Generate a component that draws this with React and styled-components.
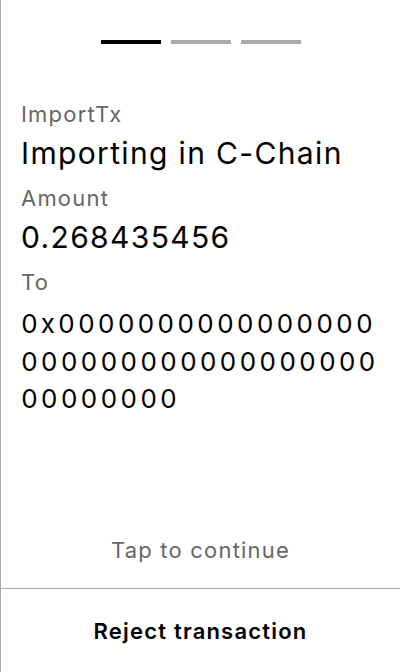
import React from 'react'
import styled, { createGlobalStyle } from 'styled-components'

const GlobalStyle = createGlobalStyle`
	html, body {
		margin: 0;
		padding: 0;
		background: #ffffff;
	}
	body {
		font-family: 'Inter', 'Liberation Sans', sans-serif;
		color: #000000;
	}
`

const Screen = styled.div`
	height: 100vh;
	box-sizing: border-box;
	border-left: 1px solid #aaaaaa;
	display: flex;
	flex-direction: column;
	background: #ffffff;
`

const Body = styled.div`
	flex: 1;
	display: flex;
	flex-direction: column;
	padding: 40px 20px 23px 20px;
	cursor: pointer;
`

const Steps = styled.div`
	display: flex;
	justify-content: center;
	gap: 10px;
	margin-bottom: 56px;
`

const Step = styled.div`
	width: 60px;
	height: 4px;
	background: ${(p) => (p.active ? '#000000' : '#aaaaaa')};
`

const Label = styled.div`
	font-size: 22px;
	line-height: 28px;
	letter-spacing: 1.2px;
	color: #666666;
	margin-bottom: 6px;
`

const Value = styled.div`
	font-size: 30px;
	line-height: 38px;
	letter-spacing: 1.35px;
	color: #000000;
	margin-bottom: 12px;
`

const Address = styled.div`
	font-size: 26px;
	line-height: 37.5px;
	letter-spacing: 3px;
	font-variant-numeric: tabular-nums;
	padding-top: 3px;
	color: #000000;
	word-break: break-all;
`

const Spacer = styled.div`
	flex: 1;
`

const Hint = styled.div`
	text-align: center;
	font-size: 22px;
	line-height: 30px;
	letter-spacing: 1.2px;
	color: #666666;
`

const Footer = styled.button`
	height: 84px;
	flex-shrink: 0;
	border: none;
	border-top: 1px solid #aaaaaa;
	background: #ffffff;
	font-family: 'Inter', 'Liberation Sans', sans-serif;
	font-size: 22px;
	font-weight: 600;
	letter-spacing: 1.2px;
	color: #000000;
	cursor: pointer;
	padding: 0;
`

const fields = [
	{ label: 'ImportTx', value: 'Importing in C-Chain' },
	{ label: 'Amount', value: '0.268435456' },
]

const address = '0x' + '0'.repeat(42)

const App = () => {
	return (
		<Screen>
			<GlobalStyle />
			<Body>
				<Steps>
					<Step active />
					<Step />
					<Step />
				</Steps>
				{fields.map((f) => (
					<div key={f.label}>
						<Label>{f.label}</Label>
						<Value>{f.value}</Value>
					</div>
				))}
				<Label>To</Label>
				<Address>{address}</Address>
				<Spacer />
				<Hint>Tap to continue</Hint>
			</Body>
			<Footer>Reject transaction</Footer>
		</Screen>
	)
}

export default App
